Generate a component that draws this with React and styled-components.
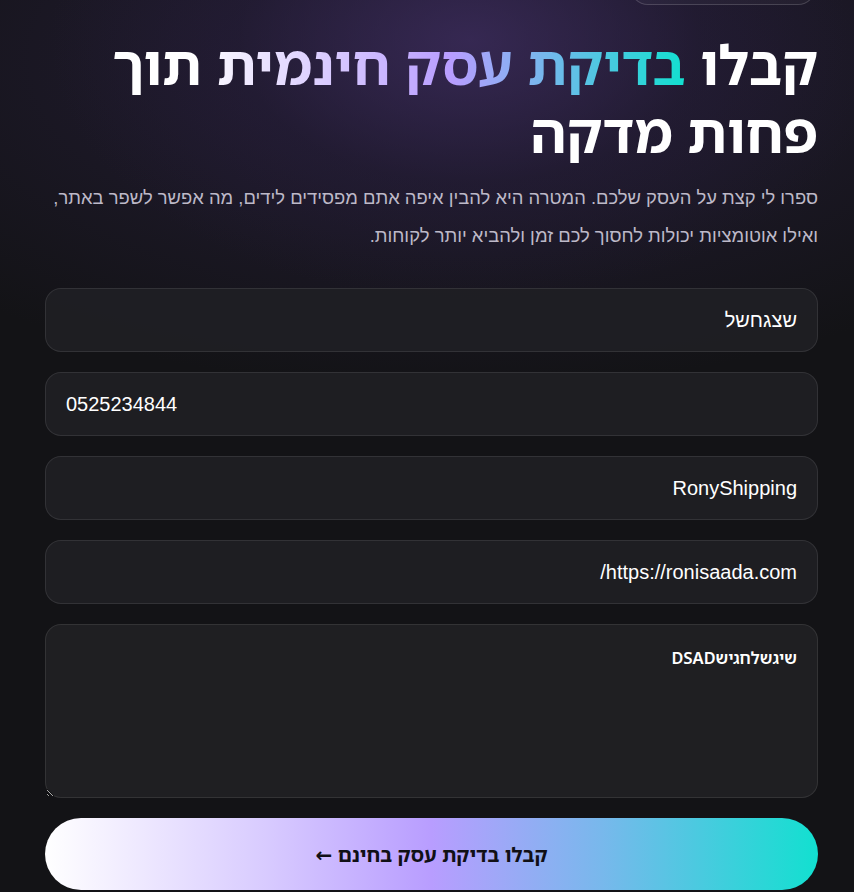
import React from "react";
import styled, { createGlobalStyle } from "styled-components";

const Global = createGlobalStyle`
  html, body { margin: 0; padding: 0; background: #131316; }
  body { font-family: "Noto Sans Hebrew", "Noto Sans", "DejaVu Sans", sans-serif; }
`;

const Page = styled.div`
  direction: rtl;
  min-height: 892px;
  box-sizing: border-box;
  padding: 0 36px 0 45px;
  background:
    radial-gradient(ellipse 420px 260px at 470px 40px, rgba(60, 44, 92, 0.75), rgba(40, 30, 62, 0.35) 55%, rgba(19, 19, 22, 0) 100%),
    radial-gradient(ellipse 700px 330px at 450px 60px, rgba(38, 30, 58, 0.9), rgba(19, 19, 22, 0) 100%),
    #131316;
  overflow: hidden;
`;

const Badge = styled.div`
  width: 184px;
  height: 36px;
  margin-top: -33px;
  margin-right: 2px;
  border-radius: 18px;
  border: 1px solid rgba(255, 255, 255, 0.16);
  background: rgba(255, 255, 255, 0.03);
`;

const Title = styled.h1`
  margin: 25px 0 0;
  font-family: "Noto Sans Hebrew", "DejaVu Sans", sans-serif;
  font-weight: 700;
  font-size: 55px;
  line-height: 68px;
  color: #ffffff;
`;

const Grad = styled.span`
  background: linear-gradient(90deg, #f7f4ff 0%, #b89dff 50%, #12e0d0 100%);
  -webkit-background-clip: text;
  background-clip: text;
  color: transparent;
`;

const Lead = styled.p`
  margin: 13px 0 0;
  font-family: "Liberation Sans", Arial, sans-serif;
  font-size: 18.4px;
  line-height: 38px;
  color: #bdb9c8;
`;

const Form = styled.form`
  display: flex;
  flex-direction: column;
  gap: 20px;
  margin-top: 33px;
`;

const Field = styled.input`
  box-sizing: border-box;
  width: 100%;
  height: 64px;
  padding: 0 20px;
  border-radius: 16px;
  border: 1px solid rgba(255, 255, 255, 0.09);
  background: rgba(32, 32, 36, 0.92);
  color: #ffffff;
  font-family: "Liberation Sans", Arial, sans-serif;
  font-size: 20px;
  direction: rtl;
  text-align: ${(p) => p.$align || "right"};
  outline: none;
`;

const Area = styled.textarea`
  box-sizing: border-box;
  width: 100%;
  height: 174px;
  padding: 20px 20px;
  border-radius: 16px;
  border: 1px solid rgba(255, 255, 255, 0.09);
  background: #1f1f22;
  color: #ffffff;
  font-family: "Noto Sans Hebrew", "Noto Sans", "DejaVu Sans", sans-serif;
  font-weight: 600;
  font-size: 16.5px;
  line-height: 26px;
  resize: vertical;
  outline: none;
  display: block;
`;

const Submit = styled.button`
  height: 72px;
  width: 100%;
  border: none;
  border-radius: 36px;
  background: linear-gradient(90deg, #ffffff 0%, #d9ccff 28%, #b89dff 50%, #78b8ec 72%, #12e0d0 100%);
  color: #111016;
  font-family: "Noto Sans Hebrew", "Noto Sans", "DejaVu Sans", sans-serif;
  font-weight: 700;
  font-size: 20px;
  cursor: pointer;
  direction: rtl;
`;

export default function App() {
  return (
    <>
      <Global />
      <Page>
        <Badge />
        <Title>
          קבלו <Grad>בדיקת עסק חינמית</Grad> תוך
          <br />
          פחות מדקה
        </Title>
        <Lead>
          ספרו לי קצת על העסק שלכם. המטרה היא להבין איפה אתם מפסידים לידים, מה אפשר לשפר באתר,
          ואילו אוטומציות יכולות לחסוך לכם זמן ולהביא יותר לקוחות.
        </Lead>
        <Form onSubmit={(e) => e.preventDefault()}>
          <Field defaultValue="שצגחשל" />
          <Field defaultValue="0525234844" $align="left" />
          <Field defaultValue="RonyShipping" />
          <Field defaultValue="https://ronisaada.com/" />
          <Area defaultValue="שיגשלחגישDSAD" />
          <Submit type="submit">קבלו בדיקת עסק בחינם ←</Submit>
        </Form>
      </Page>
    </>
  );
}
